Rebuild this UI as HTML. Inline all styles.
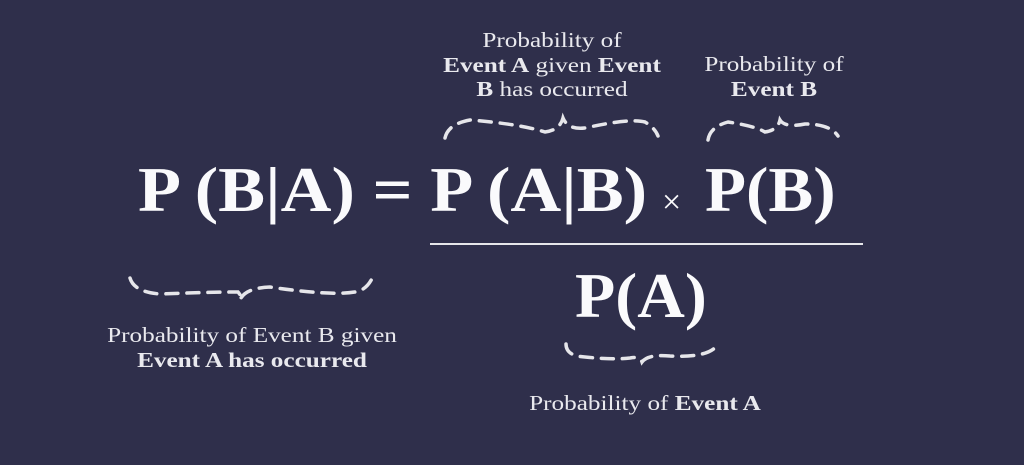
<!DOCTYPE html>
<html><head><meta charset="utf-8"><style>
html,body{margin:0;padding:0}
body{width:1024px;height:465px;background:#2f2f4b;position:relative;overflow:hidden;font-family:"Liberation Serif",serif;color:#f3f3f5}
.t{position:absolute;font-size:21px;line-height:24.5px;text-align:center;white-space:nowrap;color:#e9e9ee;transform:scaleX(1.2);transform-origin:center top}
.t b{font-weight:bold}
.f{position:absolute;font-weight:bold;font-size:64px;line-height:66px;white-space:nowrap;color:#fafafc;transform-origin:left top}
</style></head><body>
<div class="t" style="left:432px;width:240px;top:28px">Probability of<br><b>Event A</b> given <b>Event</b><br><b>B</b> has occurred</div>
<div class="t" style="left:680px;width:188px;top:52px">Probability of<br><b>Event B</b></div>
<div class="f" style="left:138px;top:157px;transform:scaleX(1.1)">P (B|A) = P (A|B)</div>
<div class="f" style="left:662px;top:170px;font-size:34px;font-weight:normal">×</div>
<div class="f" style="left:705px;top:157px;transform:scaleX(1.05)">P(B)</div>
<div style="position:absolute;left:430px;top:243px;width:433px;height:2px;background:#e6e6ea"></div>
<div class="f" style="left:575px;top:263px;transform:scaleX(1.03)">P(A)</div>
<div class="t" style="left:92px;width:320px;top:323px">Probability of Event B given<br><b>Event A has occurred</b></div>
<div class="t" style="left:500px;width:290px;top:391px">Probability of <b>Event A</b></div>
<svg width="1024" height="465" style="position:absolute;left:0;top:0" fill="none" stroke="#e6e6ea" stroke-width="3.5" stroke-linecap="round" stroke-dasharray="12 9">
<path d="M445 138 Q448 124 470 120 Q520 124 545 132 Q560 130 563 118 Q568 130 585 128 Q630 118 645 122 Q655 128 658 136"/>
<path d="M708 140 Q710 127 728 122 Q755 126 765 132 Q778 130 780 120 Q785 128 805 124 Q830 124 838 136"/>
<path d="M130 278 Q134 292 160 294 Q210 292 238 292 Q243 298 240 300 Q245 288 270 287 Q330 296 355 292 Q368 290 374 274"/>
<path d="M566 344 Q566 356 585 357 Q615 360 630 358 Q640 356 642 362 Q648 354 670 356 Q710 358 718 344"/>
</svg>
</body></html>
